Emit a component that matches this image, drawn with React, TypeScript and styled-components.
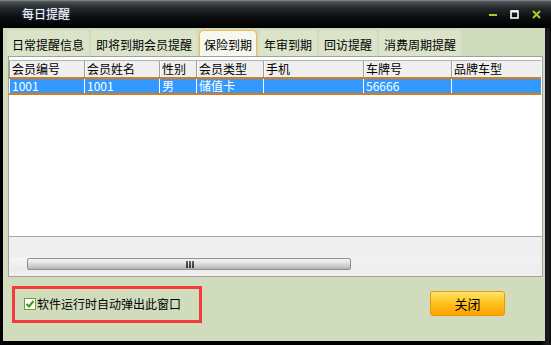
import React, { useState } from "react";
import styled, { createGlobalStyle } from "styled-components";

const Global = createGlobalStyle`
  html, body { margin: 0; padding: 0; background: #000; }
  body { font-family: "Noto Sans CJK SC", "Liberation Sans", sans-serif; font-size: 12px; }
`;

const Window = styled.div`
  width: 551px;
  height: 345px;
  background: linear-gradient(to right, #000 0, #000 540px, #1c1f22 548px, #0a0a0a 551px);
  display: flex;
  flex-direction: column;
  overflow: hidden;
`;

const TitleBar = styled.div`
  height: 28px;
  flex: none;
  display: flex;
  align-items: center;
  padding: 0 8px 0 22px;
  background: linear-gradient(to bottom, #8a8e92 0px, #4a4e52 2px, #25292c 8px, #0b0d0f 18px, #000 28px);
`;

const Title = styled.div`
  color: #fff;
  font-size: 12px;
  text-shadow: 0 0 2px rgba(120, 160, 255, 0.6);
  flex: 1;
  margin-top: -1px;
`;

const Controls = styled.div`
  display: flex;
  align-items: center;
  gap: 13px;
  margin-right: 2px;
`;

const Body = styled.div`
  flex: 1;
  margin: 0 6px 4px 3px;
  background: #d0dcbc;
  display: flex;
  flex-direction: column;
`;

const TabBar = styled.div`
  display: flex;
  gap: 2px;
  padding: 2px 0 0 4px;
  height: 26px;
  flex: none;
`;

const Tab = styled.div<{ $active?: boolean }>`
  height: ${(p) => (p.$active ? "24px" : "26px")};
  padding: 2px ${(p) => (p.$active ? "4px" : "5px")} 0;
  display: flex;
  align-items: center;
  border-radius: 5px 5px 0 0;
  background: ${(p) => (p.$active ? "#f6f7ee" : "#dbe4c9")};
  border: ${(p) => (p.$active ? "1px solid #f2b95a" : "none")};
  border-bottom: none;
  color: #000;
  font-size: 12px;
  line-height: 1;
`;

const Grid = styled.div`
  margin: 0 2px 0 5px;
  height: 219px;
  border: 1px solid #a2a2a2;
  background: #efefef;
  display: flex;
  flex-direction: column;
  flex: none;
`;

const DataArea = styled.div`
  height: 176px;
  background: #fff;
  padding: 3px 1px 0 0;
  border-bottom: 1px solid #a6a6a6;
  flex: none;
`;

const HeaderRow = styled.div`
  display: flex;
  height: 16px;
  border-top: 1px solid #b4b4b4;
  background: #efefef;
`;

const HeaderCell = styled.div<{ $w: number }>`
  width: ${(p) => p.$w}px;
  flex: none;
  box-sizing: border-box;
  border-left: 1px solid #a0a0a0;
  box-shadow: inset 1px 0 0 #fafafa;
  padding-left: 2px;
  font-size: 12px;
  line-height: 16px;
  color: #000;
  white-space: nowrap;
`;

const DataRow = styled.div`
  display: flex;
  height: 14px;
  border-top: 2px solid #e07a10;
  border-bottom: 2px solid #e07a10;
  background: #3399ff;
`;

const DataCell = styled.div<{ $w: number }>`
  width: ${(p) => p.$w}px;
  flex: none;
  box-sizing: border-box;
  border-left: 1px solid #fff;
  padding-left: 2px;
  font-size: 12px;
  line-height: 14px;
  color: #fff;
  white-space: nowrap;
`;

const ScrollZone = styled.div`
  flex: 1;
  padding: 20px 2px 0 1px;
`;

const ScrollTrack = styled.div`
  height: 14px;
  display: flex;
  background: linear-gradient(to bottom, #f3f3f3, #ececec);
`;

const ScrollBtn = styled.div`
  width: 17px;
  flex: none;
  background: linear-gradient(to bottom, #f6f6f6, #eaeaea);
`;

const Thumb = styled.div`
  width: 324px;
  flex: none;
  margin-top: 1px;
  height: 12px;
  box-sizing: border-box;
  border: 1px solid #8f8f8f;
  border-radius: 2px;
  background: linear-gradient(to bottom, #f4f4f4 0%, #e2e2e2 40%, #c4c4c8 80%, #b2b2b6 100%);
  display: flex;
  align-items: center;
  justify-content: center;
`;

const Grip = styled.div`
  display: flex;
  gap: 1px;
  margin-left: 2px;
  span {
    width: 2px;
    height: 7px;
    background: linear-gradient(to bottom, #666, #333);
  }
`;

const Bottom = styled.div`
  flex: 1;
  display: flex;
  align-items: flex-start;
  padding-top: 9px;
`;

const CheckFrame = styled.label`
  margin-left: 9px;
  width: 190px;
  height: 37px;
  box-sizing: border-box;
  border: 3px solid #f23c3c;
  display: flex;
  align-items: center;
  padding-left: 9px;
  padding-bottom: 2px;
  gap: 1px;
  cursor: pointer;
  font-size: 12px;
  color: #000;
`;

const CheckBox = styled.span`
  width: 12px;
  height: 12px;
  box-sizing: border-box;
  border: 1px solid #7c9a3c;
  background: #fff;
  display: flex;
  align-items: center;
  justify-content: center;
  flex: none;
`;

const CloseButton = styled.button`
  margin: 5px 40px 0 auto;
  width: 75px;
  height: 25px;
  border: 1px solid #e69a00;
  border-radius: 3px;
  background: linear-gradient(to bottom, #ffe46e 0%, #ffc41e 45%, #ffa000 100%);
  font-family: "Noto Sans CJK SC", "Liberation Sans", sans-serif;
  font-size: 13px;
  color: #000;
  padding: 0;
  cursor: pointer;
`;

const columns = [
  { title: "会员编号", w: 75, v: "1001" },
  { title: "会员姓名", w: 75, v: "1001" },
  { title: "性别", w: 37, v: "男" },
  { title: "会员类型", w: 67, v: "储值卡" },
  { title: "手机", w: 100, v: "" },
  { title: "车牌号", w: 88, v: "56666" },
  { title: "品牌车型", w: 92, v: "" },
];

const tabs = ["日常提醒信息", "即将到期会员提醒", "保险到期", "年审到期", "回访提醒", "消费周期提醒"];

export default function App() {
  const [checked, setChecked] = useState(true);
  return (
    <>
      <Global />
      <Window>
        <TitleBar>
          <Title>每日提醒</Title>
          <Controls>
            <svg width="8" height="8" viewBox="0 0 8 8">
              <rect x="0" y="4" width="8" height="2" fill="#a6cc2c" />
            </svg>
            <svg width="9" height="9" viewBox="0 0 9 9">
              <rect x="1" y="1" width="7" height="7" fill="none" stroke="#fff" strokeWidth="1.6" />
              <rect x="1" y="0.5" width="7" height="2" fill="#fff" />
            </svg>
            <svg width="9" height="9" viewBox="0 0 9 9">
              <path d="M1 1 L8 8 M8 1 L1 8" stroke="#a6cc2c" strokeWidth="2" />
            </svg>
          </Controls>
        </TitleBar>
        <Body>
          <TabBar>
            {tabs.map((t, i) => (
              <Tab key={t} $active={i === 2}>
                {t}
              </Tab>
            ))}
          </TabBar>
          <Grid>
            <DataArea>
              <HeaderRow>
                {columns.map((c) => (
                  <HeaderCell key={c.title} $w={c.w}>
                    {c.title}
                  </HeaderCell>
                ))}
              </HeaderRow>
              <DataRow>
                {columns.map((c) => (
                  <DataCell key={c.title} $w={c.w}>
                    {c.v}
                  </DataCell>
                ))}
              </DataRow>
            </DataArea>
            <ScrollZone>
              <ScrollTrack>
                <ScrollBtn />
                <Thumb>
                  <Grip>
                    <span />
                    <span />
                    <span />
                  </Grip>
                </Thumb>
              </ScrollTrack>
            </ScrollZone>
          </Grid>
          <Bottom>
            <CheckFrame onClick={() => setChecked(!checked)}>
              <CheckBox>
                {checked && (
                  <svg width="10" height="10" viewBox="0 0 10 10">
                    <path d="M1.5 5 L4 7.5 L8.5 2" fill="none" stroke="#2f9a1e" strokeWidth="2" />
                  </svg>
                )}
              </CheckBox>
              软件运行时自动弹出此窗口
            </CheckFrame>
            <CloseButton>关闭</CloseButton>
          </Bottom>
        </Body>
      </Window>
    </>
  );
}
